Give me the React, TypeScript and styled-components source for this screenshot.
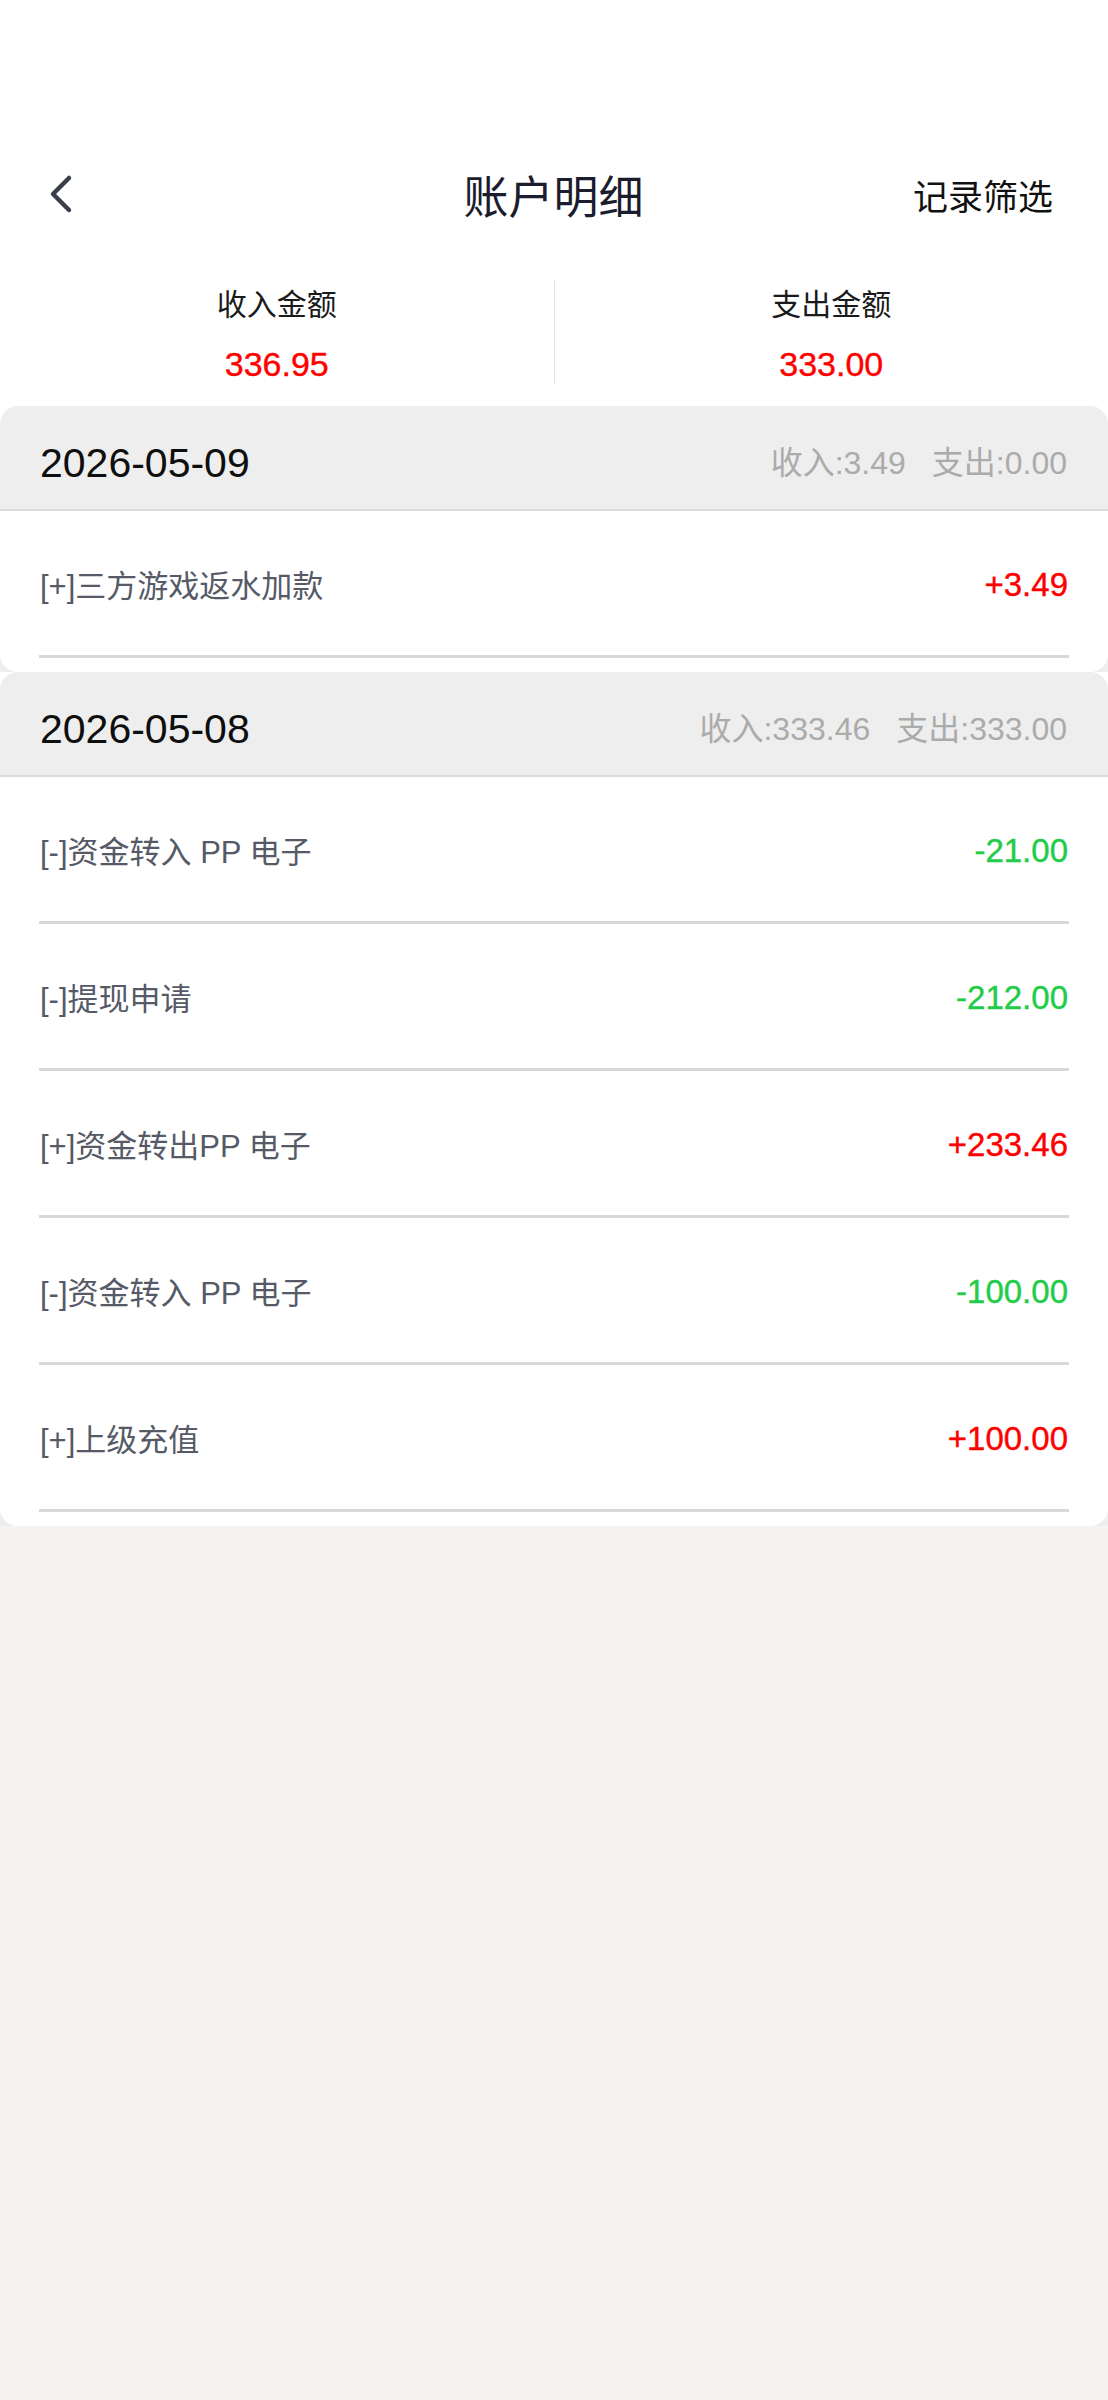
import * as React from "react"
import styled, { createGlobalStyle } from "styled-components"

const GlobalStyle = createGlobalStyle`
  html, body {
    margin: 0;
    padding: 0;
    background: #f5f4f0;
  }
  body {
    font-family: "Liberation Sans", "Noto Sans CJK SC", sans-serif;
  }
  * {
    box-sizing: border-box;
  }
`

const Page = styled.div`
  width: 1108px;
  min-height: 2400px;
  background: #f5f4f0;
`

const Top = styled.div`
  background: #ffffff;
  padding-top: 132px;
`

const NavBar = styled.div`
  height: 124px;
  display: grid;
  grid-template-columns: 200px 1fr 200px;
  align-items: center;
  padding: 0 55px 0 48px;
`

const BackButton = styled.button`
  background: transparent;
  border: none;
  padding: 0;
  width: 36px;
  height: 44px;
  display: flex;
  align-items: center;
  cursor: pointer;
`

const Title = styled.h1`
  margin: 0;
  text-align: center;
  font-size: 45px;
  font-weight: 400;
  color: #1b1c2e;
  padding-left: 6px;
`

const FilterLink = styled.span`
  text-align: right;
  font-size: 35px;
  color: #111111;
`

const Summary = styled.div`
  display: grid;
  grid-template-columns: 1fr 1px 1fr;
  align-items: center;
  height: 150px;
`

const SummaryItem = styled.div`
  display: flex;
  flex-direction: column;
  align-items: center;
  gap: 24px;
  padding-top: 8px;
`

const SummaryDivider = styled.div`
  width: 1px;
  height: 103px;
  background: #e3e3e3;
`

const SummaryLabel = styled.div`
  font-size: 30px;
  color: #1a1a1a;
  line-height: 34px;
`

const SummaryValue = styled.div`
  font-size: 34px;
  color: #ff0000;
  line-height: 36px;
  -webkit-text-stroke: 0.4px #ff0000;
`

const List = styled.div`
  background: #ffffff;
`

const Group = styled.section`
  background: #eeeeee;
  border-radius: 18px 18px 0 0;
  overflow: hidden;
`

const GroupHeader = styled.div`
  height: 105px;
  display: flex;
  align-items: center;
  justify-content: space-between;
  padding: 10px 41px 0 40px;
  border-bottom: 2px solid #dcdcdc;
`

const DateText = styled.span`
  font-size: 41px;
  color: #0e0e0e;
  line-height: 44px;
`

const Stats = styled.span`
  display: flex;
  gap: 26px;
  font-size: 32px;
  color: #ababab;
  margin-top: -6px;
`

const GroupBody = styled.div`
  background: #ffffff;
  border-radius: 0 0 18px 18px;
  padding: 0 39px 14px;
`

const Row = styled.div`
  height: 147px;
  display: flex;
  align-items: center;
  justify-content: space-between;
  border-bottom: 3px solid #d9d9d9;
  padding: 0 1px;
`

const RowLabel = styled.span`
  font-size: 31px;
  color: #555a66;
`

const Amount = styled.span<{ $income: boolean }>`
  font-size: 33px;
  margin-top: 4px;
  color: ${({ $income }) => ($income ? "#ff0000" : "#22cc48")};
  -webkit-text-stroke: 0.4px ${({ $income }) => ($income ? "#ff0000" : "#22cc48")};
`

type Entry = { label: string; amount: string }
type Day = { date: string; income: string; expense: string; entries: Entry[] }

const days: Day[] = [
  {
    date: "2026-05-09",
    income: "3.49",
    expense: "0.00",
    entries: [{ label: "[+]三方游戏返水加款", amount: "+3.49" }],
  },
  {
    date: "2026-05-08",
    income: "333.46",
    expense: "333.00",
    entries: [
      { label: "[-]资金转入 PP 电子", amount: "-21.00" },
      { label: "[-]提现申请", amount: "-212.00" },
      { label: "[+]资金转出PP 电子", amount: "+233.46" },
      { label: "[-]资金转入 PP 电子", amount: "-100.00" },
      { label: "[+]上级充值", amount: "+100.00" },
    ],
  },
]

const ChevronLeft = () => (
  <svg width="26" height="40" viewBox="0 0 26 40" fill="none">
    <polyline
      points="21,4 5,20 21,36"
      stroke="#3a3f4b"
      strokeWidth="4.5"
      strokeLinecap="round"
      strokeLinejoin="round"
    />
  </svg>
)

const App: React.FC = () => {
  return (
    <Page>
      <GlobalStyle />
      <Top>
        <NavBar>
          <BackButton aria-label="back">
            <ChevronLeft />
          </BackButton>
          <Title>账户明细</Title>
          <FilterLink>记录筛选</FilterLink>
        </NavBar>
        <Summary>
          <SummaryItem>
            <SummaryLabel>收入金额</SummaryLabel>
            <SummaryValue>336.95</SummaryValue>
          </SummaryItem>
          <SummaryDivider />
          <SummaryItem>
            <SummaryLabel>支出金额</SummaryLabel>
            <SummaryValue>333.00</SummaryValue>
          </SummaryItem>
        </Summary>
      </Top>
      <List>
        {days.map((day) => (
          <Group key={day.date}>
            <GroupHeader>
              <DateText>{day.date}</DateText>
              <Stats>
                <span>收入:{day.income}</span>
                <span>支出:{day.expense}</span>
              </Stats>
            </GroupHeader>
            <GroupBody>
              {day.entries.map((e, i) => (
                <Row key={i}>
                  <RowLabel>{e.label}</RowLabel>
                  <Amount $income={e.amount.startsWith("+")}>{e.amount}</Amount>
                </Row>
              ))}
            </GroupBody>
          </Group>
        ))}
      </List>
    </Page>
  )
}

export default App
